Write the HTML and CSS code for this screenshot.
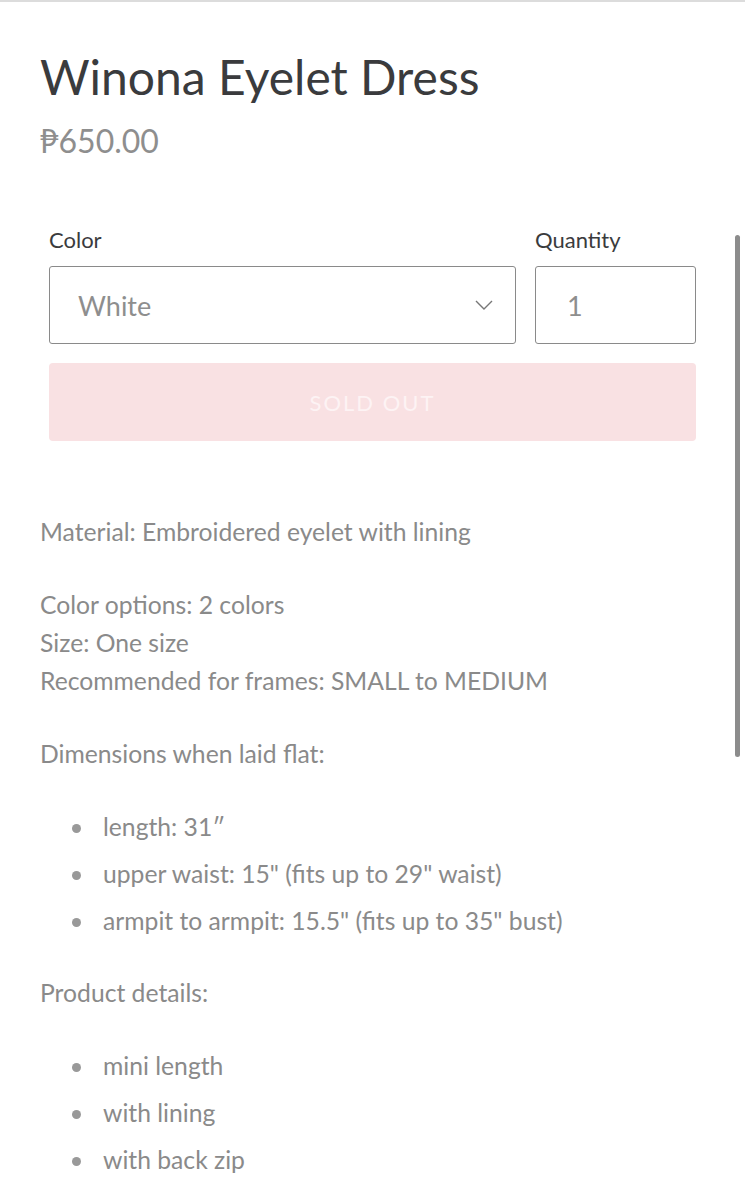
FILE: index.html
```html
<!DOCTYPE html>
<html lang="en">
<head>
<meta charset="utf-8">
<title>Winona Eyelet Dress</title>
<link rel="stylesheet" href="styles.css">
</head>
<body>
<div class="page">
  <div class="product">
    <h1 class="title">Winona Eyelet Dress</h1>
    <div class="price">₱650.00</div>

    <form class="form">
      <div class="fields">
        <div class="field">
          <label class="label">Color</label>
          <div class="select">
            <span class="select-value">White</span>
            <svg class="chevron" width="18" height="10" viewBox="0 0 18 10"><path d="M1 1l8 8 8-8" fill="none" stroke="#777" stroke-width="1.4"/></svg>
          </div>
        </div>
        <div class="field">
          <label class="label">Quantity</label>
          <div class="qty">1</div>
        </div>
      </div>
      <div class="soldout">SOLD OUT</div>
    </form>

    <div class="desc">
      <p>Material: Embroidered eyelet with lining</p>
      <p>Color options: 2 colors<br>Size: One size<br>Recommended for frames: SMALL to MEDIUM</p>
      <p>Dimensions when laid flat:</p>
      <ul>
        <li>length: 31″</li>
        <li>upper waist: 15" (fits up to 29" waist)</li>
        <li>armpit to armpit: 15.5" (fits up to 35" bust)</li>
      </ul>
      <p>Product details:</p>
      <ul class="details">
        <li>mini length</li>
        <li>with lining</li>
        <li>with back zip</li>
      </ul>
    </div>
  </div>
  <div class="scrollbar"></div>
</div>
</body>
</html>
```

FILE: styles.css
```css
html, body {
  margin: 0;
  padding: 0;
  background: #fff;
}
body {
  font-family: Lato, "Noto Sans", "Liberation Sans", sans-serif;
  color: #8a8a8a;
  height: 1200px;
  overflow: hidden;
}
.page {
  position: relative;
  border-top: 2px solid #dcdcdc;
  min-height: 1198px;
}
.product {
  padding: 0 40px;
}
.title {
  margin: 0;
  padding-top: 44px;
  font-size: 48px;
  line-height: 62px;
  font-weight: 400;
  color: #3a3b3d;
}
.price {
  margin-top: 15px;
  font-size: 32px;
  line-height: 36px;
  color: #8e8e8e;
}
.form {
  margin: 68px 9px 0 9px;
}
.fields {
  display: grid;
  grid-template-columns: 1fr 161px;
  column-gap: 19px;
}
.label {
  display: block;
  font-size: 22px;
  line-height: 26px;
  color: #3a3b3d;
  margin-bottom: 13px;
}
.select, .qty {
  box-sizing: border-box;
  height: 78px;
  border: 1.5px solid #8a8a8a;
  border-radius: 3px;
  display: flex;
  align-items: center;
  font-size: 27px;
  color: #8e8e8e;
}
.select {
  justify-content: space-between;
  padding: 0 22px 0 28px;
}
.qty {
  padding-left: 31px;
}
.soldout {
  margin-top: 19px;
  height: 78px;
  border-radius: 4px;
  background: #f9e1e3;
  color: #fdf3f4;
  font-size: 22px;
  letter-spacing: 2px;
  display: flex;
  align-items: center;
  justify-content: center;
}
.desc {
  margin-top: 72px;
  font-size: 24.7px;
  line-height: 38px;
  color: #8a8a8a;
}
.desc p {
  margin: 0 0 35px 0;
}
.desc ul {
  margin: 0 0 34px 0;
  padding-left: 63px;
  list-style: none;
}
.desc li {
  position: relative;
  margin-bottom: 9px;
}
.desc li::before {
  content: "";
  position: absolute;
  left: -31px;
  top: 16px;
  width: 9px;
  height: 9px;
  border-radius: 50%;
  background: #999;
}
.scrollbar {
  position: absolute;
  right: 5px;
  top: 233px;
  width: 5px;
  height: 522px;
  border-radius: 3px;
  background: #8c8c8c;
}
```
